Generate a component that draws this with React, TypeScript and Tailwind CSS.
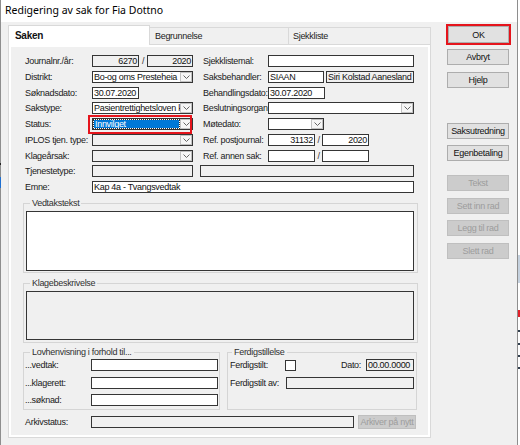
import React from "react";

type P = { className?: string; children?: React.ReactNode };

function Label({ className = "", children }: P) {
  return (
    <div className={`shrink-0 h-[12px] leading-[12px] text-[9px] text-[#202020] whitespace-nowrap ${className}`}>
      {children}
    </div>
  );
}

function Box({
  className = "",
  children,
  gray = false,
  right = false,
}: P & { gray?: boolean; right?: boolean }) {
  return (
    <div
      className={`shrink-0 h-[12px] border border-[#353535] flex items-center overflow-hidden whitespace-nowrap text-[9px] leading-[10px] text-[#111] ${
        gray ? "bg-[#f0f0f0]" : "bg-white"
      } ${right ? "justify-end pr-[1px]" : "pl-[1px]"} ${className}`}
    >
      {children}
    </div>
  );
}

function Chevron() {
  return (
    <svg width="7" height="4" viewBox="0 0 7 4" className="block">
      <path d="M0.5 0.5 L3.5 3.5 L6.5 0.5" fill="none" stroke="#666" strokeWidth="1" />
    </svg>
  );
}

function Combo({ className = "", children, gray = false }: P & { gray?: boolean }) {
  return (
    <div
      className={`shrink-0 h-[12px] border border-[#353535] flex items-stretch ${
        gray ? "bg-[#f0f0f0]" : "bg-white"
      } ${className}`}
    >
      <div className="flex-1 min-w-0 flex items-center overflow-hidden whitespace-nowrap text-[9px] leading-[10px] text-[#111] pl-[1px]">
        {children}
      </div>
      <div className="w-[12px] shrink-0 border border-[#c2c2c2] bg-[#f6f6f6] flex items-center justify-center">
        <Chevron />
      </div>
    </div>
  );
}

function Slash({ className = "" }: P) {
  return (
    <div className={`shrink-0 h-[12px] leading-[12px] text-[9px] text-[#333] text-center ${className}`}>/</div>
  );
}

function Btn({ children, disabled = false, className = "" }: P & { disabled?: boolean }) {
  return (
    <div
      className={`h-[16px] w-[62px] flex items-center justify-center border text-[9px] leading-[10px] whitespace-nowrap ${
        disabled ? "bg-[#cccccc] border-[#bfbfbf] text-[#9c9c9c]" : "bg-[#e1e1e1] border-[#adadad] text-[#111]"
      } ${className}`}
    >
      {children}
    </div>
  );
}

function Legend({ className = "", children }: P) {
  return (
    <legend className={`px-[2px] text-[9px] leading-[10px] text-[#303030] ${className}`}>{children}</legend>
  );
}

function Row({ children, className = "" }: P) {
  return <div className={`flex h-[12px] items-center ${className}`}>{children}</div>;
}

export default function App() {
  return (
    <div className="w-[520px] h-[445px] overflow-hidden flex bg-white font-['Liberation_Sans',Arial,sans-serif] tracking-[-0.3px] relative">
      {/* window */}
      <div className="w-[518px] h-full border-l border-r border-[#8e8e8e] bg-[#f0f0f0] flex flex-col">
        {/* title bar */}
        <div className="h-[22px] bg-white flex items-center pl-[4px] font-['Noto_Sans','Liberation_Sans',sans-serif] [font-stretch:75%] tracking-normal text-[10.5px] text-black whitespace-nowrap">
          Redigering av sak for Fia Dottno
        </div>

        {/* body */}
        <div className="flex">
          {/* tab control */}
          <div className="ml-[7px] mt-[3px] w-[423px] flex flex-col">
            <div className="flex h-[19px] items-end">
              <div className="relative z-10 w-[142px] h-[20px] -mb-[1px] bg-white border-l border-t border-r border-[#d9d9d9] pl-[6px] pt-[4px] text-[10px] font-bold leading-[11px] text-[#111]">
                Saken
              </div>
              <div className="w-[139px] h-[17px] bg-[#f0f0f0] border-t border-r border-[#d9d9d9] pl-[5px] pt-[3px] text-[9px] leading-[11px] text-[#222]">
                Begrunnelse
              </div>
              <div className="w-[142px] h-[17px] bg-[#f0f0f0] border-t border-r border-[#d9d9d9] pl-[4px] pt-[3px] text-[9px] leading-[11px] text-[#222]">
                Sjekkliste
              </div>
            </div>

            {/* panel */}
            <div className="h-[394px] border border-[#d9d9d9] bg-white p-[2px]">
              <div className="h-full bg-[#f0f0f0] flex flex-col">
                {/* top grid */}
                <div className="pt-[8px] pl-[14px] flex flex-col gap-[3.75px]">
                  <Row>
                    <Label className="w-[67px]">Journalnr./år:</Label>
                    <Box className="w-[47px]" gray right>6270</Box>
                    <Slash className="w-[8px]" />
                    <Box className="w-[46px]" gray right>2020</Box>
                    <div className="w-[10px] shrink-0" />
                    <Label className="w-[65px]">Sjekklistemal:</Label>
                    <Box className="w-[146px]" />
                  </Row>
                  <Row>
                    <Label className="w-[67px]">Distrikt:</Label>
                    <Combo className="w-[101px]">Bo-og oms Presteheia</Combo>
                    <div className="w-[10px] shrink-0" />
                    <Label className="w-[65px]">Saksbehandler:</Label>
                    <Box className="w-[56px]">SIAAN</Box>
                    <div className="w-[2px] shrink-0" />
                    <Box className="w-[88px]" gray>Siri Kolstad Aanesland</Box>
                  </Row>
                  <Row>
                    <Label className="w-[67px]">Søknadsdato:</Label>
                    <Box className="w-[47px]">30.07.2020</Box>
                    <div className="w-[54px] shrink-0" />
                    <div className="w-[10px] shrink-0" />
                    <Label className="w-[65px]">Behandlingsdato:</Label>
                    <Box className="w-[57px]">30.07.2020</Box>
                  </Row>
                  <Row>
                    <Label className="w-[67px]">Sakstype:</Label>
                    <Combo className="w-[101px]">Pasientrettighetsloven kap 4a</Combo>
                    <div className="w-[10px] shrink-0" />
                    <Label className="w-[65px]">Beslutningsorgan:</Label>
                    <Combo className="w-[146px]" />
                  </Row>
                  <Row className="relative">
                    <Label className="w-[67px]">Status:</Label>
                    <div className="shrink-0 w-[101px] h-[12px] border border-[#353535] bg-white flex items-stretch">
                      <div className="flex-1 min-w-0 m-[1px] bg-[#0078d7] outline-1 outline-dotted outline-[#333] flex items-center pl-[1px] text-[9px] leading-[10px] text-white whitespace-nowrap overflow-hidden">
                        Innvilget
                      </div>
                      <div className="w-[12px] shrink-0 border border-[#c2c2c2] bg-[#f6f6f6] flex items-center justify-center">
                        <Chevron />
                      </div>
                    </div>
                    <div className="w-[10px] shrink-0" />
                    <Label className="w-[65px]">Møtedato:</Label>
                    <Combo className="w-[56px]" />
                    <div className="absolute left-[63px] top-[-3px] w-[104px] h-[19px] border-2 border-[#e5141c] pointer-events-none" />
                  </Row>
                  <Row>
                    <Label className="w-[67px]">IPLOS tjen. type:</Label>
                    <Combo className="w-[101px]" gray />
                    <div className="w-[10px] shrink-0" />
                    <Label className="w-[65px]">Ref. postjournal:</Label>
                    <Box className="w-[47px]" right>31132</Box>
                    <Slash className="w-[7px]" />
                    <Box className="w-[47px]" right>2020</Box>
                  </Row>
                  <Row>
                    <Label className="w-[67px]">Klageårsak:</Label>
                    <Combo className="w-[101px]" gray />
                    <div className="w-[10px] shrink-0" />
                    <Label className="w-[65px]">Ref. annen sak:</Label>
                    <Box className="w-[47px]" />
                    <Slash className="w-[7px]" />
                    <Box className="w-[47px]" />
                  </Row>
                  <Row>
                    <Label className="w-[67px]">Tjenestetype:</Label>
                    <Box className="w-[101px]" gray />
                    <div className="w-[7px] shrink-0" />
                    <Box className="w-[214px]" gray />
                  </Row>
                  <Row>
                    <Label className="w-[67px]">Emne:</Label>
                    <Box className="w-[322px]">Kap 4a - Tvangsvedtak</Box>
                  </Row>
                </div>

                {/* Vedtakstekst */}
                <fieldset className="ml-[12px] mt-[5px] w-[395px] border border-[#d5d5d5]">
                  <Legend className="ml-[6px]">Vedtakstekst</Legend>
                  <div className="pt-[3px] pb-[1px] pl-[2px]">
                    <div className="w-[388px] h-[60px] border border-[#353535] bg-white" />
                  </div>
                </fieldset>

                {/* Klagebeskrivelse */}
                <fieldset className="ml-[12px] mt-[5px] w-[395px] border border-[#d5d5d5]">
                  <Legend className="ml-[6px]">Klagebeskrivelse</Legend>
                  <div className="pt-[3px] pb-[2px] pl-[2px]">
                    <div className="w-[388px] h-[49px] border border-[#353535] bg-[#f0f0f0]" />
                  </div>
                </fieldset>

                {/* lower groups */}
                <div className="ml-[12px] mt-[4px] flex">
                  <fieldset className="w-[197px] border border-[#d5d5d5]">
                    <Legend className="ml-[6px]">Lovhenvisning i forhold til...</Legend>
                    <div className="pt-[2px] pb-[3px] pl-[1px] flex flex-col gap-[5.5px]">
                      <Row>
                        <Label className="w-[66px]">...vedtak:</Label>
                        <Box className="w-[127px]" />
                      </Row>
                      <Row>
                        <Label className="w-[66px]">...klagerett:</Label>
                        <Box className="w-[127px]" />
                      </Row>
                      <Row>
                        <Label className="w-[66px]">...søknad:</Label>
                        <Box className="w-[127px]" />
                      </Row>
                    </div>
                  </fieldset>
                  <fieldset className="ml-[7px] w-[190px] border border-[#d5d5d5]">
                    <Legend className="ml-[4px]">Ferdigstillelse</Legend>
                    <div className="pt-[2px] pl-[2px] pr-[2px] flex flex-col gap-[5.5px]">
                      <Row>
                        <Label className="w-[55px]">Ferdigstilt:</Label>
                        <div className="w-[11px] h-[11px] shrink-0 border border-[#353535] bg-white" />
                        <div className="flex-1" />
                        <Label className="mr-[5px]">Dato:</Label>
                        <Box className="w-[48px]" gray>00.00.0000</Box>
                      </Row>
                      <Row>
                        <Label className="w-[56px]">Ferdigstilt av:</Label>
                        <Box className="w-[128px]" gray />
                      </Row>
                    </div>
                  </fieldset>
                </div>

                {/* Arkivstatus */}
                <div className="mt-[5px] pl-[14px] flex h-[14px] items-center">
                  <Label className="w-[66px]">Arkivstatus:</Label>
                  <Box className="w-[263px]" gray />
                  <div className="ml-[4px] w-[58px] h-[14px] flex items-center justify-center bg-[#cccccc] border border-[#bfbfbf] text-[9px] leading-[10px] text-[#9c9c9c] whitespace-nowrap">
                    Arkiver på nytt
                  </div>
                </div>
              </div>
            </div>
          </div>

          {/* buttons column */}
          <div className="ml-[15px] mt-[2px] flex flex-col">
            <div className="w-[65px] h-[21px] border-2 border-[#e5141c]">
              <div className="w-full h-full flex items-center justify-center bg-[#e1e1e1] border border-[#adadad] text-[9px] leading-[10px] text-[#111]">
                OK
              </div>
            </div>
            <Btn className="ml-[1px] mt-[4px]">Avbryt</Btn>
            <Btn className="ml-[1px] mt-[7px]">Hjelp</Btn>
            <Btn className="ml-[1px] mt-[35px]">Saksutredning</Btn>
            <Btn className="ml-[1px] mt-[6px]">Egenbetaling</Btn>
            <Btn className="ml-[1px] mt-[14px]" disabled>Tekst</Btn>
            <Btn className="ml-[1px] mt-[7px]" disabled>Sett inn rad</Btn>
            <Btn className="ml-[1px] mt-[6px]" disabled>Legg til rad</Btn>
            <Btn className="ml-[1px] mt-[7px]" disabled>Slett rad</Btn>
          </div>
        </div>
      </div>

      {/* background strip at right edge */}
      <div className="w-[2px] h-full flex flex-col bg-white">
        <div className="h-[255px] shrink-0" />
        <div className="h-[28px] shrink-0 bg-[#c5d1de]" />
        <div className="h-[27px] shrink-0" />
        <div className="h-[7px] shrink-0 bg-[#e3202a]" />
        <div className="h-[13px] shrink-0" />
        <div className="h-[2px] shrink-0 bg-[#33404f]" />
        <div className="h-[11px] shrink-0" />
        <div className="h-[2px] shrink-0 bg-[#33404f]" />
        <div className="h-[10px] shrink-0" />
        <div className="h-[2px] shrink-0 bg-[#33404f]" />
        <div className="h-[10px] shrink-0" />
        <div className="h-[2px] shrink-0 bg-[#33404f]" />
      </div>

      {/* artifacts of windows behind, at the left edge */}
      <div className="absolute left-0 top-[163px] w-[1px] h-[2px] bg-[#222]" />
      <div className="absolute left-0 top-[177px] w-[1px] h-[11px] bg-[#1f6fd1]" />
    </div>
  );
}
